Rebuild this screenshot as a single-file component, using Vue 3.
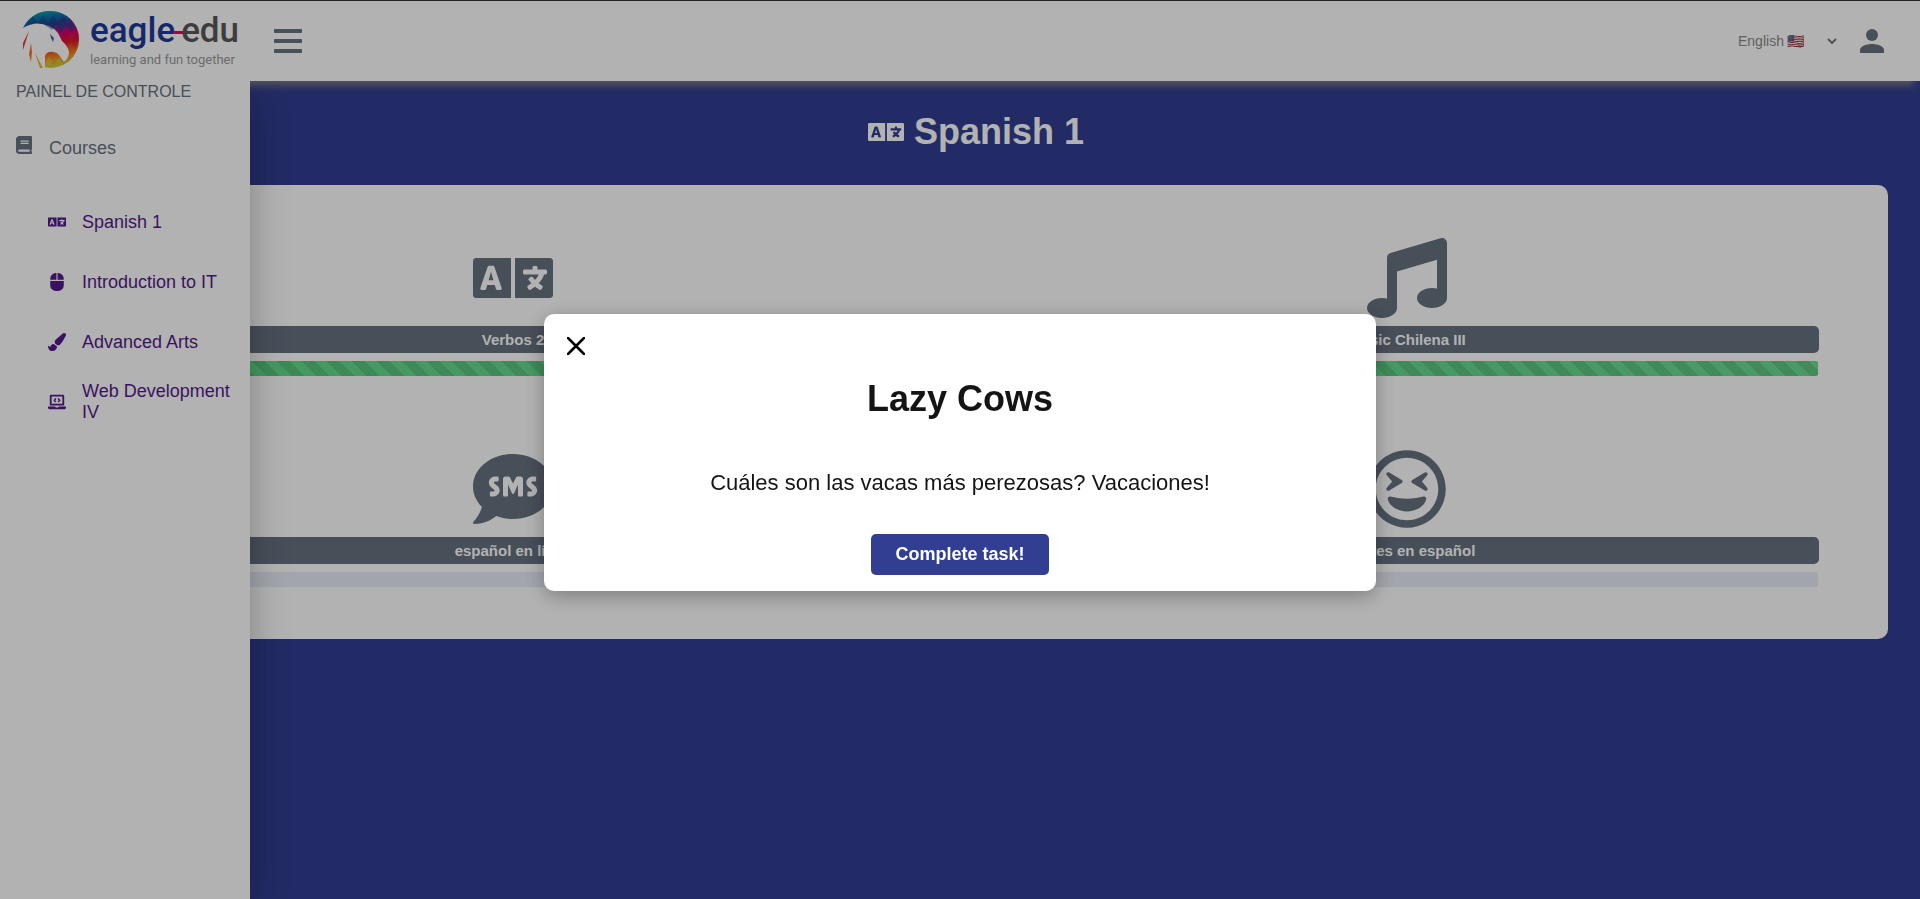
<script setup>
import { ref } from 'vue'

const language = ref('en')
const modalOpen = ref(true)

const icons = {
  language: {
    box: '0 0 640 512',
    d: 'M152.1 236.2c-3.5-12.1-7.8-33.2-7.8-33.2h-.5s-4.3 21.1-7.8 33.2l-11.1 37.5H163zM616 96H336v320h280c13.3 0 24-10.7 24-24V120c0-13.3-10.7-24-24-24zm-24 120c0 6.6-5.4 12-12 12h-11.4c-6.9 23.6-21.7 47.4-42.7 69.9 8.4 6.4 17.1 12.5 26.1 18 5.5 3.4 7.3 10.5 4.1 16.2l-7.9 13.9c-3.4 5.9-10.9 7.8-16.7 4.3-12.6-7.8-24.5-16.1-35.4-24.9-10.9 8.7-22.7 17.1-35.4 24.9-5.8 3.5-13.3 1.6-16.7-4.3l-7.9-13.9c-3.2-5.6-1.4-12.8 4.2-16.2 9.3-5.7 18-11.7 26.1-18-7.9-8.4-14.9-17-21-25.7-4-5.7-2.2-13.6 3.7-17.1l6.5-3.9 7.3-4.3c5.4-3.2 12.4-1.7 16 3.4 5 7 10.8 14 17.4 20.9 13.5-14.2 23.8-28.9 30-43.2H412c-6.6 0-12-5.4-12-12v-16c0-6.6 5.4-12 12-12h64v-16c0-6.6 5.4-12 12-12h16c6.6 0 12 5.4 12 12v16h64c6.6 0 12 5.4 12 12zM0 120v272c0 13.3 10.7 24 24 24h280V96H24c-13.3 0-24 10.7-24 24zm58.9 216.1L116.4 167c1.7-4.9 6.2-8.1 11.4-8.1h32.5c5.1 0 9.7 3.3 11.4 8.1l57.5 169.1c2.6 7.8-3.1 15.9-11.4 15.9h-22.9a12 12 0 0 1-11.5-8.6l-9.4-31.9h-60.2l-9.1 31.8c-1.5 5.1-6.2 8.7-11.5 8.7H70.3c-8.2 0-14-8.1-11.4-15.9z'
  },
  music: {
    box: '0 0 512 512',
    d: 'M470.38 1.51L150.41 96A32 32 0 0 0 128 126.51v261.41A139 139 0 0 0 96 384c-53 0-96 28.66-96 64s43 64 96 64 96-28.66 96-64V214.32l256-75v184.61a138.4 138.4 0 0 0-32-3.93c-53 0-96 28.66-96 64s43 64 96 64 96-28.65 96-64V32a32 32 0 0 0-41.62-30.49z'
  },
  sms: {
    box: '0 0 512 512',
    d: 'M256 32C114.6 32 0 125.1 0 240c0 49.6 21.4 95 57 130.7C44.5 421.1 2.7 466 2.2 466.5c-2.2 2.3-2.8 5.7-1.5 8.7 1.3 3 4.1 4.8 7.3 4.8 66.3 0 116-31.8 140.6-51.4 32.7 12.3 69 19.4 107.4 19.4 141.4 0 256-93.1 256-208S397.4 32 256 32zM128.2 304H116c-4.4 0-8-3.6-8-8v-16c0-4.4 3.6-8 8-8h12.3c6 0 10.4-3.5 10.4-6.6 0-1.3-.8-2.7-2.1-3.8l-21.9-18.8c-8.5-7.2-13.3-17.5-13.3-28.1 0-21.3 19-38.6 42.4-38.6H156c4.4 0 8 3.6 8 8v16c0 4.4-3.6 8-8 8h-12.3c-6 0-10.4 3.5-10.4 6.6 0 1.3.8 2.7 2.1 3.8l21.9 18.8c8.5 7.2 13.3 17.5 13.3 28.1.1 21.3-19 38.6-42.4 38.6zm191.8-8c0 4.4-3.6 8-8 8h-16c-4.4 0-8-3.6-8-8v-68.2l-24.8 55.8c-2.9 5.9-11.4 5.9-14.3 0L224 227.8V296c0 4.4-3.6 8-8 8h-16c-4.4 0-8-3.6-8-8V192c0-8.8 7.2-16 16-16h16c6.1 0 11.6 3.4 14.3 8.8l17.7 35.4 17.7-35.4c2.7-5.4 8.3-8.8 14.3-8.8h16c8.8 0 16 7.2 16 16v104zm48.3 8H356c-4.4 0-8-3.6-8-8v-16c0-4.4 3.6-8 8-8h12.3c6 0 10.4-3.5 10.4-6.6 0-1.3-.8-2.7-2.1-3.8l-21.9-18.8c-8.5-7.2-13.3-17.5-13.3-28.1 0-21.3 19-38.6 42.4-38.6H396c4.4 0 8 3.6 8 8v16c0 4.4-3.6 8-8 8h-12.3c-6 0-10.4 3.5-10.4 6.6 0 1.3.8 2.7 2.1 3.8l21.9 18.8c8.5 7.2 13.3 17.5 13.3 28.1.1 21.3-18.9 38.6-42.3 38.6z'
  },
  grin: {
    box: '0 0 496 512',
    d: 'M248 8C111 8 0 119 0 256s111 248 248 248 248-111 248-248S385 8 248 8zm0 448c-110.3 0-200-89.7-200-200S137.7 56 248 56s200 89.7 200 200-89.7 200-200 200zm105.6-151.4c-25.9 8.3-64.4 13.1-105.6 13.1s-79.6-4.8-105.6-13.1c-9.9-3.1-19.4 5.4-17.7 15.3 7.9 47.1 71.3 80 123.3 80s115.3-32.9 123.3-80c1.6-9.8-7.7-18.4-17.7-15.3zm-234.7-40.8c3.6 4.2 9.9 5.7 15.3 2.5l80-48c3.6-2.2 5.8-6.1 5.8-10.3s-2.2-8.1-5.8-10.3l-80-48c-5.1-3-11.4-1.9-15.3 2.5-3.8 4.5-3.8 11-.1 15.5l33.6 40.3-33.6 40.3c-3.8 4.5-3.7 11.1.1 15.5zm242.9 2.5c5.4 3.2 11.7 1.7 15.3-2.5 3.8-4.5 3.8-11 .1-15.5L343.6 208l33.6-40.3c3.8-4.5 3.7-11.1-.1-15.5-3.8-4.4-10.2-5.4-15.3-2.5l-80 48c-3.6 2.2-5.8 6.1-5.8 10.3s2.2 8.1 5.8 10.3l80 48z'
  },
  mouse: {
    box: '0 0 384 512',
    d: 'M0 352a160 160 0 0 0 160 160h64a160 160 0 0 0 160-160V224H0zM176 0h-16A160 160 0 0 0 0 160v32h176zm48 0h-16v192h176v-32A160 160 0 0 0 224 0z'
  },
  brush: {
    box: '0 0 512 512',
    d: 'M167.02 309.34c-40.12 2.58-76.53 17.86-97.19 72.3-2.35 6.21-8 9.98-14.59 9.98-11.11 0-45.46-27.67-55.25-34.35C0 439.62 37.93 512 128 512c75.86 0 128-43.77 128-120.19 0-3.11-.65-6.08-.97-9.13l-88.01-73.34zM457.89 0c-15.16 0-29.37 6.71-40.21 16.45C213.27 199.05 192 203.34 192 257.09c0 13.7 3.25 26.76 8.73 38.7l63.82 53.18c7.21 1.8 14.64 3.03 22.39 3.03 62.11 0 98.11-45.47 211.16-256.46 7.38-14.35 13.9-29.85 13.9-45.99C512 20.64 486 0 457.89 0z'
  },
  laptop: {
    box: '0 0 640 512',
    d: 'M255.03 261.65c6.25 6.25 16.38 6.25 22.63 0l11.31-11.31c6.25-6.25 6.25-16.38 0-22.63L253.25 192l35.71-35.72c6.25-6.25 6.25-16.38 0-22.63l-11.31-11.31c-6.25-6.25-16.38-6.25-22.63 0l-58.34 58.34c-6.25 6.25-6.25 16.38 0 22.63l58.35 58.34zm96.01-11.3l11.31 11.31c6.25 6.25 16.38 6.25 22.63 0l58.34-58.34c6.25-6.25 6.25-16.38 0-22.63l-58.34-58.34c-6.25-6.25-16.38-6.25-22.63 0l-11.31 11.31c-6.25 6.25-6.25 16.38 0 22.63L386.75 192l-35.71 35.72c-6.25 6.25-6.25 16.38 0 22.63zM624 416H381.54c-.74 19.81-14.71 32-32.74 32H288c-18.69 0-33.02-17.47-32.77-32H16c-8.8 0-16 7.2-16 16v16c0 35.2 28.8 64 64 64h512c35.2 0 64-28.8 64-64v-16c0-8.8-7.2-16-16-16zM576 48c0-26.4-21.6-48-48-48H112C85.6 0 64 21.6 64 48v336h512V48zm-64 272H128V64h384v256z'
  },
  book: {
    box: '0 0 448 512',
    d: 'M448 360V24c0-13.3-10.7-24-24-24H96C43 0 0 43 0 96v320c0 53 43 96 96 96h328c13.3 0 24-10.7 24-24v-16c0-7.5-3.5-14.3-8.9-18.7-4.2-15.4-4.2-59.3 0-74.7 5.4-4.3 8.9-11.1 8.9-18.6zM128 134c0-3.3 2.7-6 6-6h212c3.3 0 6 2.7 6 6v20c0 3.3-2.7 6-6 6H134c-3.3 0-6-2.7-6-6v-20zm0 64c0-3.3 2.7-6 6-6h212c3.3 0 6 2.7 6 6v20c0 3.3-2.7 6-6 6H134c-3.3 0-6-2.7-6-6v-20zm253.4 250H96c-17.7 0-32-14.3-32-32 0-17.6 14.4-32 32-32h285.4c-1.9 17.1-1.9 46.9 0 64z'
  }
}

const courses = [
  { name: 'Spanish 1', icon: icons.language },
  { name: 'Introduction to IT', icon: icons.mouse },
  { name: 'Advanced Arts', icon: icons.brush },
  { name: 'Web Development IV', icon: icons.laptop }
]

const tasks = [
  { name: 'Verbos 2', icon: icons.language, progress: 100 },
  { name: 'Music Chilena III', icon: icons.music, progress: 100 },
  { name: 'español en línea', icon: icons.sms, progress: 0 },
  { name: 'Chistes en español', icon: icons.grin, progress: 0 }
]
</script>

<template>
  <div class="page">
    <header class="topbar">
      <a class="logo" href="#" aria-label="eagle-edu">
        <svg class="logo-mark" viewBox="0 0 70 70" aria-hidden="true">
          <defs>
            <linearGradient id="feather" x1="0.3" y1="0" x2="0.5" y2="1">
              <stop offset="0" stop-color="#00a5a0" />
              <stop offset="0.12" stop-color="#0a78ae" />
              <stop offset="0.24" stop-color="#2a489c" />
              <stop offset="0.36" stop-color="#8a1f8c" />
              <stop offset="0.46" stop-color="#d5006f" />
              <stop offset="0.6" stop-color="#e61e2b" />
              <stop offset="0.76" stop-color="#ec6422" />
              <stop offset="0.88" stop-color="#ee9a28" />
              <stop offset="1" stop-color="#b9c832" />
            </linearGradient>
          </defs>
          <path fill="url(#feather)" d="M7 24A29 29 0 0 1 35 7A28 28 0 0 1 63 35A28 28 0 0 1 29 63V52Q31 47 37 48Q42 48 45 54L48 58Q53 54 53 48Q52 42 46 37L42 29Q38 24 33 22Q20 16 7 24Z" />
          <path fill="#00407f" opacity=".4" d="m13 18 4-6 5 7 5-8 5 8 5-8 5 8 5-8 5 8 3-3 4 8-4 5-5-8-5 8-5-8-4 5-9-6-8-1-9 2z" />
          <path fill="#b00040" opacity=".25" d="m46 36 5-8 5 8 5-8 2 8-4 9-4-7-4 5z" />
          <path fill="#e8d03c" opacity=".5" d="m29 60 4-8 5 9 5-8 4 8-8 3H29z" />
          <path fill="#4668b0" d="m34 30 4 4-1 4-2-4z" />
          <path fill="#e13a2e" d="M13 27 7 46V39z" />
          <path fill="#ec7a24" d="m15 39 1 9-1 10-2-8z" />
          <path fill="#eeb22c" d="m19 49 8 15h-3z" />
        </svg>
        <span class="logo-text">
          <span class="logo-name"><span class="logo-eagle">eagle</span><span class="logo-edu">edu</span></span>
          <span class="logo-tag">learning and fun together</span>
        </span>
      </a>
      <button class="menu" type="button" aria-label="Menu">
        <svg viewBox="0 0 28 24" aria-hidden="true">
          <rect width="28" height="4" rx="1" />
          <rect y="10" width="28" height="4" rx="1" />
          <rect y="20" width="28" height="4" rx="1" />
        </svg>
      </button>
      <div class="language">
        <select v-model="language" aria-label="Language">
          <option value="en">English 🇺🇸</option>
          <option value="es">Español 🇪🇸</option>
          <option value="pt">Português 🇧🇷</option>
        </select>
        <svg class="chevron" viewBox="0 0 10 6" aria-hidden="true">
          <path d="m1 1 4 4 4-4" />
        </svg>
      </div>
      <button class="account" type="button" aria-label="Account">
        <svg viewBox="0 0 24 24" aria-hidden="true">
          <circle cx="12" cy="6" r="6" />
          <path d="M0 24v-3c0-4 7-6 12-6s12 2 12 6v3z" />
        </svg>
      </button>
    </header>

    <nav class="sidebar">
      <p class="sidebar-title">PAINEL DE CONTROLE</p>
      <div class="section">
        <svg :viewBox="icons.book.box" preserveAspectRatio="none" aria-hidden="true"><path :d="icons.book.d" /></svg>
        <span>Courses</span>
      </div>
      <ul>
        <li v-for="course in courses" :key="course.name">
          <a href="#">
            <svg :viewBox="course.icon.box" aria-hidden="true"><path :d="course.icon.d" /></svg>
            <span>{{ course.name }}</span>
          </a>
        </li>
      </ul>
    </nav>

    <main>
      <h1>
        <svg :viewBox="icons.language.box" aria-hidden="true"><path :d="icons.language.d" /></svg>
        <span>Spanish 1</span>
      </h1>
      <section class="tasks">
        <article v-for="task in tasks" :key="task.name">
          <svg :viewBox="task.icon.box" aria-hidden="true"><path :d="task.icon.d" /></svg>
          <h2>{{ task.name }}</h2>
          <div class="track" role="progressbar" :aria-label="task.name" :aria-valuenow="task.progress">
            <div class="bar" :style="{ width: task.progress + '%' }"></div>
          </div>
        </article>
      </section>
    </main>

    <div v-if="modalOpen" class="overlay">
      <div class="modal" role="dialog" aria-modal="true" aria-labelledby="modal-title">
        <button class="close" type="button" aria-label="Close" @click="modalOpen = false">
          <svg viewBox="0 0 18 18" aria-hidden="true"><path d="m1 1 16 16M17 1 1 17" /></svg>
        </button>
        <h2 id="modal-title">Lazy Cows</h2>
        <p>Cuáles son las vacas más perezosas? Vacaciones!</p>
        <button class="complete" type="button" @click="modalOpen = false">Complete task!</button>
      </div>
    </div>
  </div>
</template>

<style>
body {
  background: #313e91;
}
</style>

<style scoped>
.page {
  position: relative;
  box-sizing: border-box;
  min-height: 100vh;
  border-top: 1px solid #383339;
  background: #313e91;
  font-family: "Liberation Sans", Arial, sans-serif;
  color: #667180;
}

svg {
  display: block;
  fill: currentColor;
}

button {
  padding: 0;
  border: 0;
  background: none;
  color: inherit;
  font-family: inherit;
  cursor: pointer;
}

.topbar {
  position: relative;
  z-index: 2;
  display: flex;
  align-items: center;
  height: 80px;
  padding-right: 36px;
  background: #fff;
  box-shadow: 0 10px 8px -6px #808080;
}

.logo {
  display: flex;
  width: 224px;
  height: 74px;
  margin-left: 16px;
  text-decoration: none;
}

.logo-mark {
  flex: none;
  width: 70px;
  height: 70px;
}

.logo-text {
  display: flex;
  flex-direction: column;
  margin-left: 4px;
  font-family: Roboto, sans-serif;
  white-space: nowrap;
}

.logo-name {
  display: flex;
  gap: 6px;
  font-size: 35px;
  font-weight: 500;
  line-height: 54px;
}

.logo-eagle {
  position: relative;
  color: #1d3a98;
}

.logo-eagle::after {
  content: "";
  position: absolute;
  right: -8px;
  top: 27px;
  width: 10px;
  height: 3px;
  background: #c8175f;
}

.logo-edu {
  color: #58585a;
}

.logo-tag {
  margin-top: -6px;
  font-size: 13px;
  line-height: 16px;
  color: #9a9a9a;
}

.menu {
  width: 28px;
  height: 24px;
  margin-left: 34px;
}

.language {
  position: relative;
  display: flex;
  align-items: center;
  margin-left: auto;
}

.language select {
  appearance: none;
  width: 104px;
  height: 32px;
  padding: 0;
  border: 0;
  background: transparent;
  color: #8a8a8a;
  font-family: "Liberation Sans", "Noto Color Emoji", sans-serif;
  font-size: 14px;
}

.chevron {
  position: absolute;
  right: 5px;
  width: 10px;
  height: 6px;
  fill: none;
  stroke: #777;
  stroke-width: 2;
  pointer-events: none;
}

.account {
  width: 24px;
  height: 24px;
  margin-left: 18px;
}

.sidebar {
  position: absolute;
  z-index: 3;
  top: 80px;
  bottom: 0;
  left: 0;
  box-sizing: border-box;
  width: 250px;
  background: #fff;
  box-shadow: 0 10px 36px rgba(0, 0, 0, 0.28);
  clip-path: inset(0 -60px 0 0);
}

.sidebar-title {
  margin: 0;
  padding: 0 16px;
  font-size: 16px;
  line-height: 22px;
}

.section {
  display: flex;
  align-items: center;
  gap: 17px;
  margin: 33px 16px 0;
  font-size: 18px;
  line-height: 24px;
}

.section svg {
  width: 16px;
  height: 18px;
  margin-bottom: 6px;
}

.sidebar ul {
  margin: 32px 0 0;
  padding: 0;
  list-style: none;
}

.sidebar a {
  display: flex;
  align-items: center;
  gap: 16px;
  height: 60px;
  padding: 0 16px 0 48px;
  color: #551a8b;
  font-size: 18px;
  line-height: 21px;
  text-decoration: none;
}

.sidebar a svg {
  flex: none;
  width: 18px;
  height: 18px;
}

main {
  padding: 0 32px 48px;
}

h1 {
  display: flex;
  align-items: center;
  justify-content: center;
  gap: 10px;
  margin: 0;
  padding: 30px 0 32px 32px;
  color: #fff;
  font-size: 36px;
  line-height: 42px;
}

h1 svg {
  width: 36px;
  height: 36px;
}

.tasks {
  display: grid;
  grid-template-columns: 1fr 1fr;
  gap: 73px 70px;
  padding: 53px 69px 52px;
  border-radius: 10px;
  background: #fff;
}

.tasks svg {
  width: 80px;
  height: 80px;
  margin: 0 auto;
}

.tasks h2 {
  margin: 8px 0;
  border-radius: 5px;
  background: #667180;
  color: #fff;
  font-size: 15px;
  line-height: 27px;
  text-align: center;
}

.track {
  overflow: hidden;
  height: 15px;
  margin: 0 1px;
  border-radius: 2px;
  background: #e8eef7;
}

.bar {
  height: 100%;
  background:
    linear-gradient(45deg, rgba(0, 0, 0, 0.1) 25%, transparent 25%, transparent 50%, rgba(0, 0, 0, 0.1) 50%, rgba(0, 0, 0, 0.1) 75%, transparent 75%) 0 0 / 25px 25px,
    linear-gradient(90deg, #5fdb88, #6bdd92);
}

.overlay {
  position: fixed;
  z-index: 10;
  inset: 0;
  display: flex;
  align-items: center;
  justify-content: center;
  padding-top: 6px;
  background: rgba(0, 0, 0, 0.3);
}

.modal {
  display: flex;
  flex-direction: column;
  align-items: center;
  box-sizing: border-box;
  width: 832px;
  max-width: 90%;
  padding: 12px;
  padding-bottom: 16px;
  border-radius: 10px;
  background: #fff;
  box-shadow: 0 5px 20px rgba(0, 0, 0, 0.3);
  color: #141414;
}

.close {
  display: grid;
  place-items: center;
  align-self: flex-start;
  width: 40px;
  height: 40px;
}

.close svg {
  width: 18px;
  height: 18px;
  fill: none;
  stroke: #000;
  stroke-width: 2.5;
  stroke-linecap: round;
}

.modal h2 {
  margin: 12px 0 50px;
  font-size: 36px;
  line-height: 42px;
}

.modal p {
  margin: 0 0 38px;
  font-size: 22px;
  line-height: 26px;
}

.complete {
  height: 41px;
  padding: 0 24px;
  border-radius: 5px;
  background: #313e91;
  color: #fff;
  font-size: 18px;
  font-weight: 700;
}
</style>
